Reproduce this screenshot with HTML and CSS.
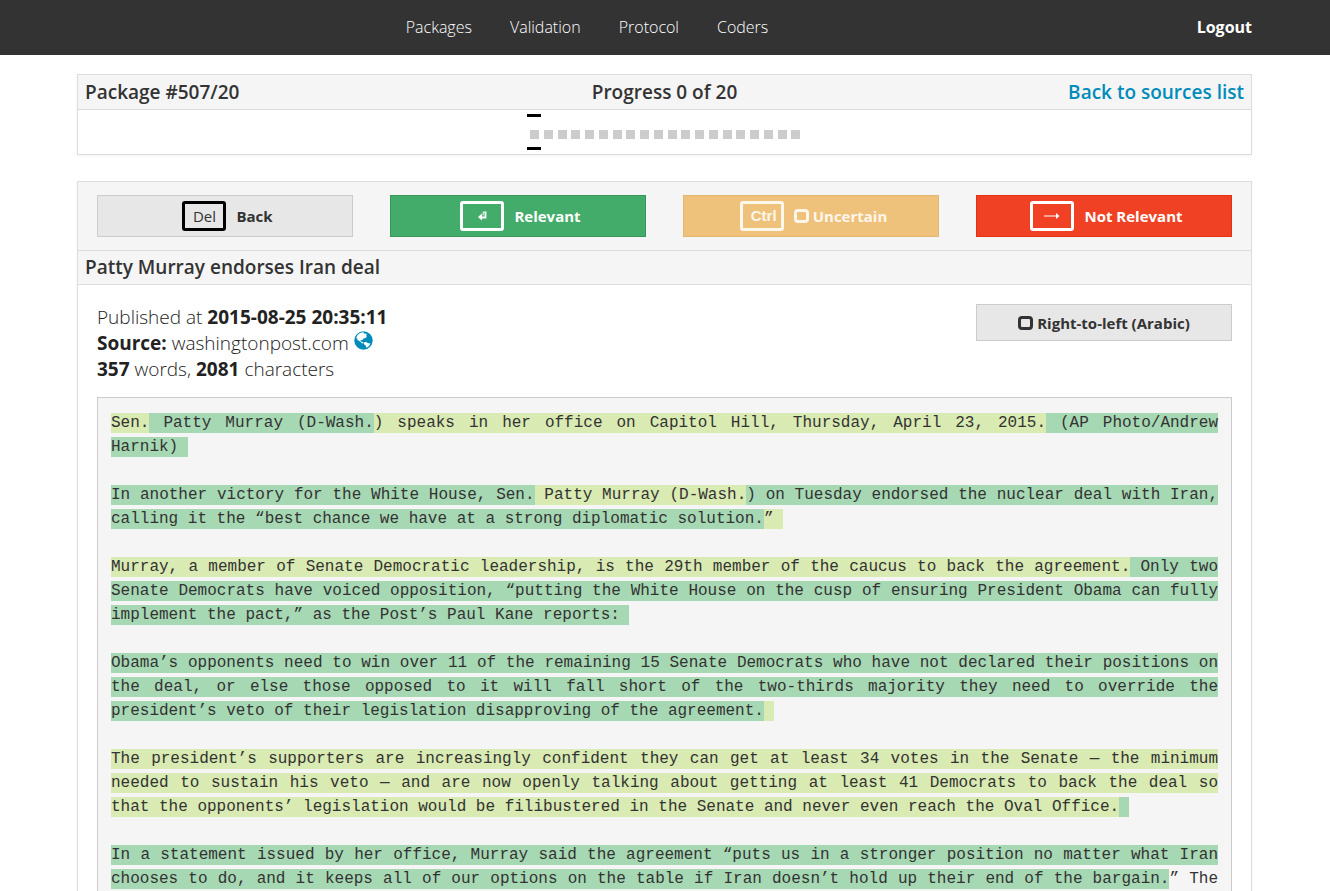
FILE: index.html
```html
<!DOCTYPE html>
<html lang="en">
<head>
<meta charset="utf-8">
<title>Package #507/20</title>
<link rel="stylesheet" href="styles.css">
</head>
<body>
<header class="topbar">
  <nav class="topbar-nav">
    <a href="#">Packages</a>
    <a href="#">Validation</a>
    <a href="#">Protocol</a>
    <a href="#">Coders</a>
  </nav>
  <a class="logout" href="#">Logout</a>
</header>
<main class="page">
  <section class="panel">
    <div class="panel-head">
      <h2>Package #507/20</h2>
      <h2>Progress 0 of 20</h2>
      <h2><a href="#">Back to sources list</a></h2>
    </div>
    <div class="progress">
      <ol class="steps">
        <li class="current"></li><li></li><li></li><li></li><li></li><li></li><li></li><li></li><li></li><li></li><li></li><li></li><li></li><li></li><li></li><li></li><li></li><li></li><li></li><li></li>
      </ol>
    </div>
  </section>

  <section class="panel">
    <div class="actions">
      <button class="btn btn-back" type="button"><kbd>Del</kbd>Back</button>
      <button class="btn btn-relevant" type="button"><kbd><svg width="9" height="10" viewBox="0 0 9 10" fill="none" stroke="currentColor"><path d="M7.500 1v5.500H3" stroke-width="1.800"/><path d="M8.400 1H5.200v3.500" stroke-width="1"/><path d="M0 6L4 2.500V9.500z" fill="currentColor" stroke="none"/></svg></kbd>Relevant</button>
      <label class="btn btn-uncertain"><kbd>Ctrl</kbd><input type="checkbox">Uncertain</label>
      <button class="btn btn-reject" type="button"><kbd><svg width="16" height="8" viewBox="0 0 16 8" fill="currentColor"><path d="M0 3.500h12V1l3.500 3L12 7V4.500H0z"/></svg></kbd>Not Relevant</button>
    </div>
    <h2 class="title">Patty Murray endorses Iran deal</h2>
    <div class="content">
      <div class="meta">
        <div>
          <p>Published at <b>2015-08-25 20:35:11</b></p>
          <p><b>Source:</b> washingtonpost.com <a href="#" aria-label="Open source"><svg width="19" height="19" viewBox="0 0 19 19"><circle cx="9.500" cy="9.500" r="9.200" fill="#008cba"/><path fill="#fff" d="M3.500 4L6 2l3-.8 1.500.8-1 1 2-.5 1.500 1-1 1.500 1 .5-1.500 1.500-2 .5-1 1.500-2 .3.300 1.200 2 .5.700 1.500-1.500-.2L6 10.500 3.500 9 3 7 2 7.500z"/><path fill="#fff" d="M9.500 11.500l2.500-.5 2.500 1.300 2 .2-1.500 2.500-2.500 1.800-1-2.500-1.500-1z"/></svg></a></p>
          <p><b>357</b> words, <b>2081</b> characters</p>
        </div>
        <label class="btn btn-rtl"><input type="checkbox">Right-to-left (Arabic)</label>
      </div>
      <article class="text">
        <p><mark class="a">Sen.</mark><mark class="b"> Patty Murray (D-Wash.</mark><mark class="a">) speaks in her office on Capitol Hill, Thursday, April 23, 2015.</mark><mark class="b"> (AP Photo/Andrew Harnik)&nbsp;</mark></p>
        <p><mark class="b">In another victory for the White House, Sen.</mark><mark class="a"> Patty Murray (D-Wash.</mark><mark class="b">) on Tuesday endorsed the nuclear deal with Iran, calling it the “best chance we have at a strong diplomatic solution.</mark><mark class="a">”&nbsp;</mark></p>
        <p><mark class="a">Murray, a member of Senate Democratic leadership, is the 29th member of the caucus to back the agreement.</mark><mark class="b"> Only two Senate Democrats have voiced opposition, “putting the White House on the cusp of ensuring President Obama can fully implement the pact,” as the Post’s Paul Kane reports:&nbsp;</mark></p>
        <p><mark class="b">Obama’s opponents need to win over 11 of the remaining 15 Senate Democrats who have not declared their positions on the deal, or else those opposed to it will fall short of the two-thirds majority they need to override the president’s veto of their legislation disapproving of the agreement.</mark><mark class="a">&nbsp;</mark></p>
        <p><mark class="a">The president’s supporters are increasingly confident they can get at least 34 votes in the Senate — the minimum needed to sustain his veto — and are now openly talking about getting at least 41 Democrats to back the deal so that the opponents’ legislation would be filibustered in the Senate and never even reach the Oval Office.</mark><mark class="b">&nbsp;</mark></p>
        <p class="open"><mark class="b">In a statement issued by her office, Murray said the agreement “puts us in a stronger position no matter what Iran chooses to do, and it keeps all of our options on the table if Iran doesn’t hold up their end of the bargain.</mark>” The</p>
      </article>
    </div>
  </section>
</main>
</body>
</html>
```
FILE: styles.css
```css
* { box-sizing: border-box; }
body { margin: 0; background: #fff; color: #222; font-family: "Open Sans", sans-serif; font-size: 16px; }
h2, p, ol { margin: 0; padding: 0; }
a { color: #008cba; text-decoration: none; }

.topbar { display: grid; grid-template-columns: 1fr auto 1fr; align-items: center; height: 55px; padding: 0 78px 2px; background: #333; }
.topbar a { color: #fff; }
.topbar-nav { grid-column: 2; display: flex; gap: 38px; font-weight: 300; margin-right: 156px; }
.topbar .logout { justify-self: end; font-weight: 700; }

.page { display: flex; flex-direction: column; gap: 26px; padding: 19px 78px 0 77px; }
.panel { border: 1px solid #ddd; box-shadow: 0 1px 2px rgba(0, 0, 0, 0.06); }
.panel:last-child { border-bottom: 0; }
h2 { font-size: 19px; line-height: 34px; font-weight: 600; color: #333; }
.panel-head { display: grid; grid-template-columns: 1fr auto 1fr; padding: 0 7px; background: #f5f5f5; border-bottom: 1px solid #ddd; }
.panel-head h2:last-child { text-align: right; }
.progress { display: flex; justify-content: center; padding: 4px 0; }
.steps { display: grid; grid-template-columns: repeat(20, minmax(0, 1fr)); width: 275px; height: 36px; list-style: none; }
.steps li { display: flex; align-items: center; padding: 5px 0 0 3px; border: solid transparent; border-width: 3px 0; }
.steps li::before { content: ""; width: 9px; height: 9px; background: #ccc; }
.steps .current { border-color: #000; }

.actions { display: grid; grid-template-columns: repeat(4, 1fr); gap: 37px; padding: 13px 19px; background: #f5f5f5; border-bottom: 1px solid #ddd; }
.btn { display: flex; align-items: center; justify-content: center; height: 42px; padding: 0; border: 1px solid; border-radius: 0; font: 700 15px/20px "Open Sans", sans-serif; cursor: pointer; }
.btn-back, .btn-rtl { background: #e7e7e7; border-color: #ccc; color: #333; }
.btn-relevant { background: #43ac6a; border-color: #3a945b; color: #fff; }
.btn-uncertain { background: #efc27b; border-color: #e2b772; color: #fdf6eb; }
.btn-reject { background: #f04124; border-color: #ea2f10; color: #fff; }
kbd { display: flex; align-items: center; justify-content: center; width: 44px; height: 30px; margin: 0 10px 0 5px; border: 3px solid; border-radius: 3px; font: 15px/20px "Open Sans", sans-serif; }
.btn-back kbd { border-color: #000; }
.btn-uncertain kbd { padding-left: 4px; font-family: "Liberation Sans", sans-serif; font-weight: 700; }
.btn input { appearance: none; width: 15px; height: 14px; margin: 0 4px 0 0; border: 3px solid; border-radius: 4px; color: inherit; }

.title { padding: 0 7px; line-height: 33px; background: #f5f5f5; border-bottom: 1px solid #ddd; }
.content { padding: 19px 19px 0; }
.meta { display: flex; justify-content: space-between; font-size: 19px; line-height: 26px; font-weight: 300; }
.meta p { height: 26px; }
.meta b { font-weight: 700; }
.btn-rtl { width: 256px; height: 37px; }
.text { margin-top: 15px; padding: 13px 13px 0; border: 1px solid #ccc; border-bottom: 0; background: #f5f5f5; color: #333; font: 16px/24px "Liberation Mono", monospace; text-align: justify; }
.text p { margin-bottom: 24px; }
.text .open { margin-bottom: 0; text-align-last: justify; }
mark { color: inherit; padding: 1px 0; }
.a { background: #d9eab2; }
.b { background: #a7d8b4; }
```
